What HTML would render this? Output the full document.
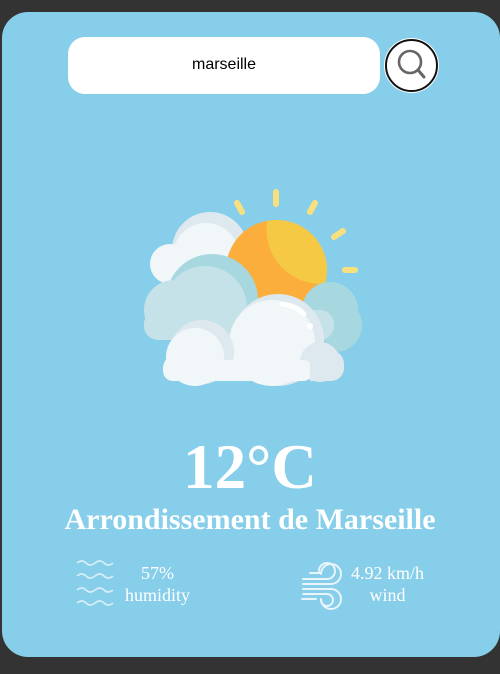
<!DOCTYPE html>
<html><head><style>
html,body{margin:0;padding:0;background:#333;width:500px;height:674px;overflow:hidden}
.card{position:absolute;left:2px;top:12px;width:498px;height:645px;background:#87ceea;border-radius:26px}
.inp{position:absolute;left:68px;top:37px;width:312px;height:57px;background:#fff;border-radius:17px;font:16px "Liberation Sans",sans-serif;color:#000;text-align:center;line-height:56px}
.btn{position:absolute;left:385px;top:39px;width:49px;height:49px;border:2px solid #111;border-radius:50%;background:#fff;box-shadow:0 0 0 1px #fff}
.t{position:absolute;left:0;width:500px;text-align:center;color:#fff;font-family:"Liberation Serif",serif;font-weight:bold}
.s{position:absolute;color:#fff;font:18px/1.2 "Liberation Serif",serif;text-align:center}
</style></head><body>
<div class="card"></div>
<div class="inp">marseille</div>
<div class="btn"><svg width="49" height="49" viewBox="0 0 49 49"><circle cx="23" cy="21" r="11" fill="none" stroke="#666" stroke-width="2.6"/><line x1="31" y1="29" x2="37" y2="36" stroke="#666" stroke-width="3" stroke-linecap="round"/></svg></div>
<svg style="position:absolute;left:130px;top:180px" width="240" height="210" viewBox="0 0 240 210">
<g stroke="#f9e07f" stroke-width="6" stroke-linecap="round">
<line x1="146" y1="12" x2="146" y2="24"/><line x1="107" y1="23" x2="112" y2="32"/><line x1="185" y1="23" x2="180" y2="32"/><line x1="213" y1="51" x2="204" y2="57"/><line x1="215" y1="90" x2="225" y2="90"/></g>
<!-- back white cloud -->
<circle cx="80" cy="70" r="38" fill="#dde9ee"/>
<circle cx="76" cy="76" r="33" fill="#f1f6f9"/>
<circle cx="40" cy="84" r="20" fill="#f1f6f9"/>
<rect x="40" y="84" width="60" height="20" fill="#f1f6f9"/>
<!-- sun -->
<circle cx="146" cy="90" r="50" fill="#fbae3b"/><path d="M137 41 A50 50 0 0 1 195 104 A55 55 0 0 1 137 41Z" fill="#f6c945"/>
<!-- middle cloud -->
<circle cx="200" cy="130" r="28" fill="#a7d7df"/>
<circle cx="205" cy="145" r="27" fill="#a7d7df"/>
<circle cx="82" cy="120" r="46" fill="#a7d7df"/>
<circle cx="75" cy="128" r="42" fill="#c5e2e8"/>
<circle cx="44" cy="130" r="30" fill="#c5e2e8"/>
<rect x="14" y="130" width="190" height="30" rx="14" fill="#c5e2e8"/>
<!-- front cloud -->
<circle cx="148" cy="160" r="46" fill="#dde9ee"/>
<circle cx="142" cy="163" r="43" fill="#f1f6f9"/>
<circle cx="190" cy="182" r="20" fill="#dde9ee"/>
<circle cx="72" cy="172" r="32" fill="#dde9ee"/>
<circle cx="65" cy="177" r="29" fill="#f1f6f9"/>
<circle cx="46" cy="188" r="13" fill="#f1f6f9"/>
<rect x="33" y="180" width="150" height="21" rx="10" fill="#f1f6f9"/>
<path d="M180 170 h20 a14 14 0 0 1 14 14 v4 a13 13 0 0 1 -13 13 h-21z" fill="#dde9ee"/>
<path d="M152 124 Q167 126 174 134" stroke="#fff" stroke-width="5" fill="none" stroke-linecap="round"/>
<circle cx="180" cy="146" r="3" fill="#fff"/>
</svg>
<div class="t" style="top:432px;font-size:63px;line-height:70px">12°C</div>
<div class="t" style="top:502px;font-size:30px;line-height:36px">Arrondissement de Marseille</div>
<svg style="position:absolute;left:76px;top:558px" width="40" height="52" viewBox="0 0 40 52" fill="none" stroke="#d6eef6" stroke-width="1.6">
<path d="M1 5q5-4 9 0t9 0t9 0t9 0"/><path d="M1 18q5-4 9 0t9 0t9 0t9 0"/><path d="M1 32q5-4 9 0t9 0t9 0t9 0"/><path d="M1 45q5-4 9 0t9 0t9 0t9 0"/></svg>
<div class="s" style="left:110px;top:563px;width:95px">57%<br>humidity</div>
<svg style="position:absolute;left:300px;top:560px" width="46" height="50" viewBox="0 0 46 50" fill="none" stroke="#e8f5fa" stroke-width="2" stroke-linecap="round">
<path d="M3 19h24a8 8 0 1 0-8-8"/><path d="M3 24h28a10 10 0 1 0-10-10"/><path d="M3 29h28a10 10 0 1 1-10 10"/><path d="M3 34h24a6 6 0 1 1-6 6"/><path d="M10 13h10"/><path d="M2 39h14"/></svg>
<div class="s" style="left:340px;top:563px;width:95px">4.92 km/h<br>wind</div>
</body></html>
